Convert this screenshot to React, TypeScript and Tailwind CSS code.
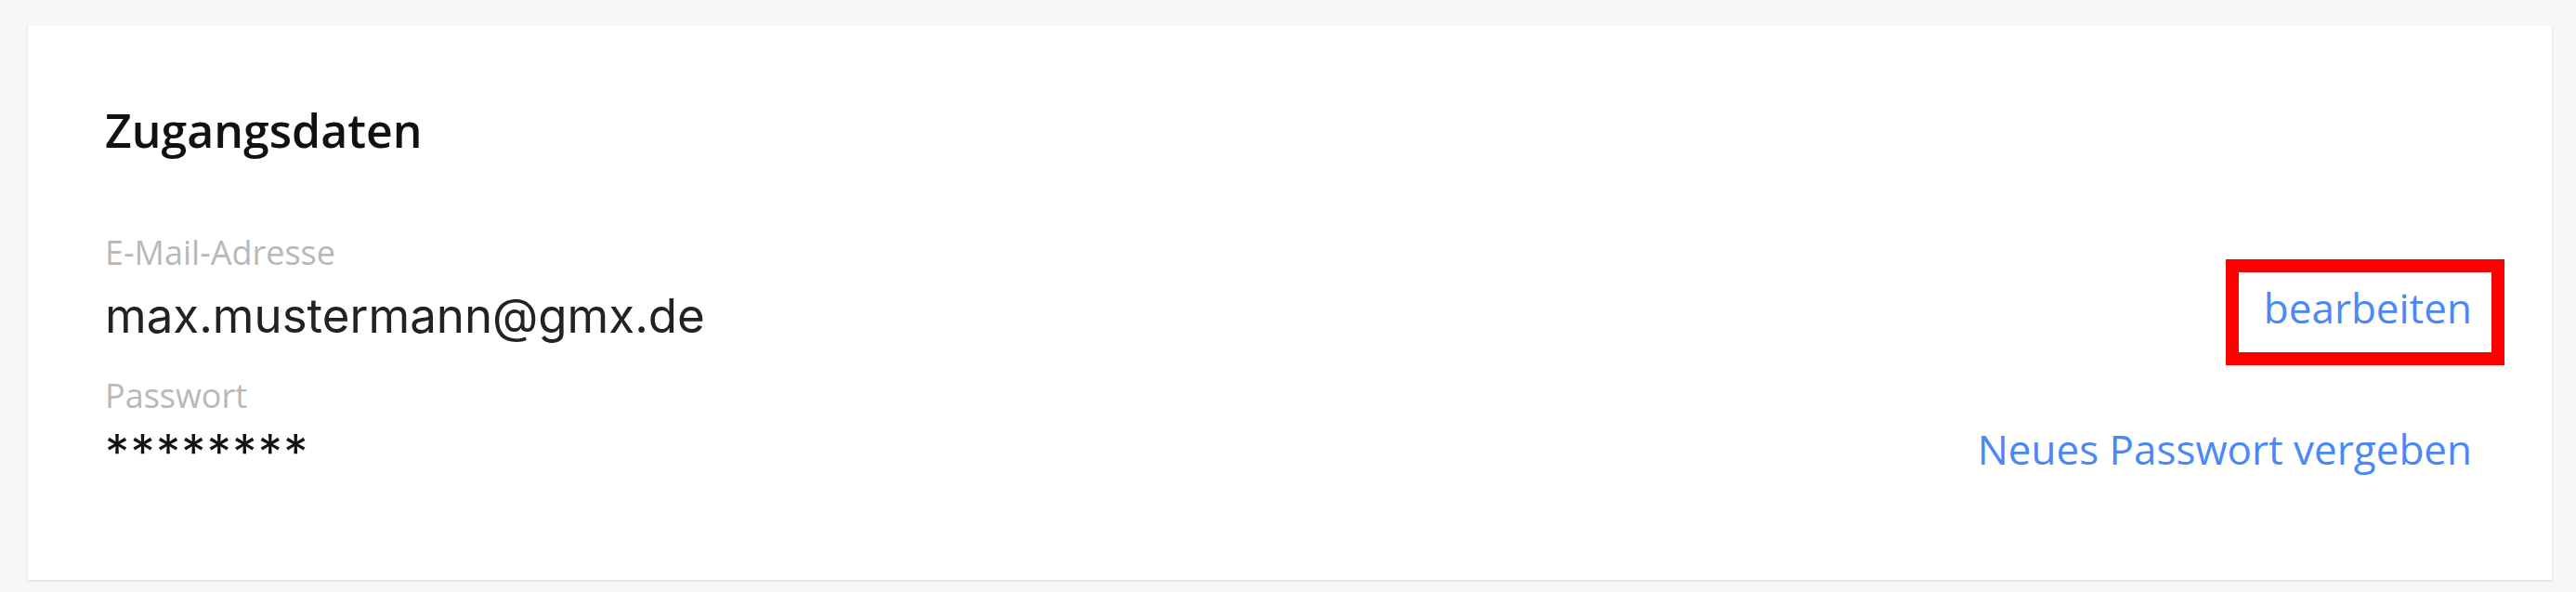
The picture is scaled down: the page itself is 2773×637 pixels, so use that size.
export default function App() {
  return (
    <div className="h-screen w-full overflow-hidden bg-[#f7f7f7] pt-[28px]">
      <section className="ml-[30px] mr-[26px] bg-white pl-[83px] pr-[86px] pb-[105px] pt-[78px] shadow-[0_1px_3px_rgba(0,0,0,0.12)]">
        <h2 className="font-['Open_Sans',sans-serif] text-[50px] font-semibold leading-[68px] text-[#111]">
          Zugangsdaten
        </h2>
        <div className="mt-[74px] flex items-start justify-between">
          <div className="flex flex-col">
            <span className="font-['Open_Sans',sans-serif] text-[36px] font-normal leading-[48px] text-[#b8b8b8]">
              E-Mail-Adresse
            </span>
            <span className="mt-[12px] font-['Inter',sans-serif] text-[51px] leading-[64px] text-[#222]">
              max.mustermann@gmx.de
            </span>
            <span className="mt-[30px] font-['Open_Sans',sans-serif] text-[36px] font-normal leading-[48px] text-[#b8b8b8]">
              Passwort
            </span>
            <span className="mt-[5px] font-['Inter',sans-serif] text-[52px] leading-[64px] tracking-[1.4px] text-[#111]">
              ********
            </span>
          </div>
          <div className="flex flex-col items-end font-['Open_Sans',sans-serif] text-[44px] leading-[60px] text-[#4a88f5]">
            <a href="#" className="relative mt-[53px]">
              bearbeiten
              <span className="pointer-events-none absolute -bottom-[32px] -left-[41px] -right-[35px] -top-[22px] border-[14px] border-[#ff0000]" />
            </a>
            <a href="#" className="mt-[92px]">
              Neues Passwort vergeben
            </a>
          </div>
        </div>
      </section>
    </div>
  );
}
